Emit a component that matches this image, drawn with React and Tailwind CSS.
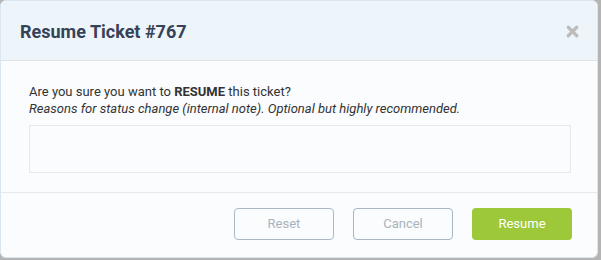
import { X } from "lucide-react";

export default function App() {
  return (
    <div
      className="w-[601px] h-[260px] bg-[#b4b4b4] overflow-hidden"
      style={{ fontFamily: "Roboto, 'Liberation Sans', sans-serif" }}
    >
      <div className="w-[598px] h-[258px] bg-[#fafcfe] rounded-[6px] border border-[#dbe7f0] flex flex-col overflow-hidden">
        {/* Header */}
        <div className="h-[60px] shrink-0 bg-[#eef5fa] border-b border-[#dfe3e6] flex items-center justify-between pl-[19px] pr-[16px]">
          <h1 className="text-[18px] font-bold text-[#364258] leading-none mt-[2px]">
            Resume Ticket #767
          </h1>
          <X className="w-[17px] h-[17px] text-[#bcbcbc] mt-[2px]" strokeWidth={4.5} />
        </div>

        {/* Body */}
        <div className="px-[28px] pt-[22px] h-[132px] shrink-0 border-b border-[#e6e8ea]">
          <p className="text-[13px] leading-[17px] text-[#333333]">
            Are you sure you want to <span className="font-bold">RESUME</span> this ticket?
          </p>
          <p className="text-[13px] leading-[17px] italic text-[#333333]">
            Reasons for status change (internal note). Optional but highly recommended.
          </p>
          <textarea className="mt-[8px] block w-[542px] h-[48px] bg-[#fafcfe] border border-[#e8e8e6] resize-none outline-none" />
        </div>

        {/* Footer */}
        <div className="flex-1 flex justify-end items-start gap-[19px] pt-[15px] pr-[25px]">
          <button className="w-[100px] h-[32px] rounded-[4px] border border-[#aab7c3] text-[13px] text-[#a9b3bd] bg-transparent">
            Reset
          </button>
          <button className="w-[100px] h-[32px] rounded-[4px] border border-[#aab7c3] text-[13px] text-[#a9b3bd] bg-transparent">
            Cancel
          </button>
          <button className="w-[100px] h-[32px] rounded-[4px] bg-[#9dc83a] text-[13px] text-white">
            Resume
          </button>
        </div>
      </div>
    </div>
  );
}
